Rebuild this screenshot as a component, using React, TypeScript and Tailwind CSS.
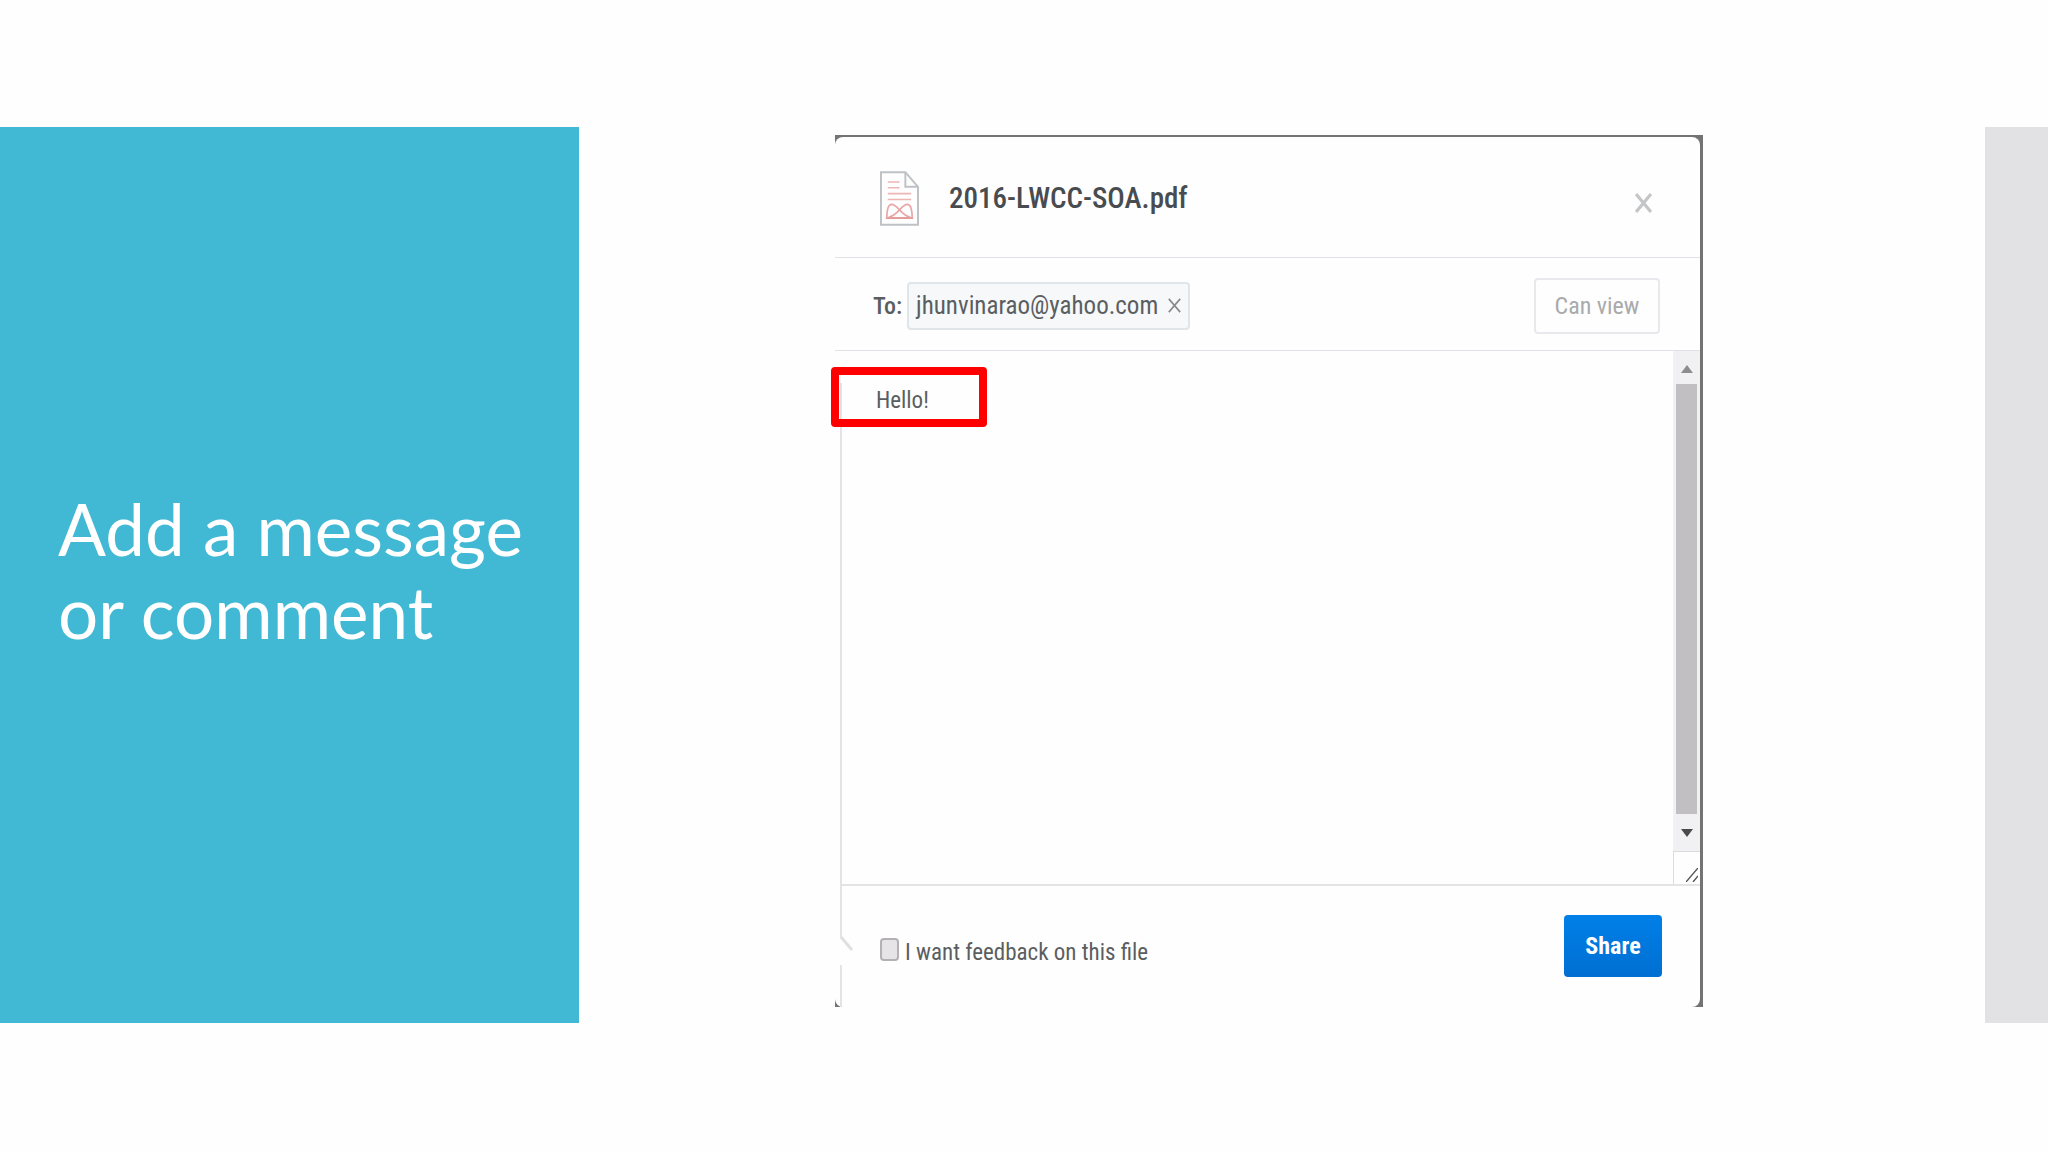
import { useState } from "react";

const FileIcon = () => (
  <svg viewBox="0 0 40 56" className="h-[55px] w-[39px] shrink-0" fill="none">
    <path d="M1 1H26L39 16V55H1Z" stroke="#bfc2c5" strokeWidth="2" />
    <path d="M26 1V16H39" stroke="#bfc2c5" strokeWidth="2" />
    <path d="M8 11H20M8 17H20M8 23H32M8 29H32" stroke="#eeb5b5" strokeWidth="1.6" />
    <path d="M6 48H34" stroke="#e79c9c" strokeWidth="2" />
    <path
      d="M7 48C7 38 9 34 12 34C18 34 22 46 31 47M33 48C33 38 31 34 28 34C22 34 18 46 9 47"
      stroke="#e9a5a5"
      strokeWidth="1.6"
    />
  </svg>
);

const Cross = ({ className }: { className: string }) => (
  <svg viewBox="0 0 16 18" className={className} stroke="currentColor" preserveAspectRatio="none">
    <path d="M1 1L15 17M15 1L1 17" />
  </svg>
);

const ScrollBar = () => (
  <div className="flex w-[27px] shrink-0 flex-col">
    <div className="flex grow flex-col bg-[#f1f0f2]">
      <div className="flex h-[33px] items-center justify-center pt-[2px]">
        <svg viewBox="0 0 12 8" className="h-2 w-3" fill="#8d8d8f">
          <path d="M6 0L12 8H0Z" />
        </svg>
      </div>
      <div className="mx-[3px] grow bg-[#c1bfc1]" />
      <div className="flex h-[37px] items-center justify-center">
        <svg viewBox="0 0 12 8" className="h-2 w-3" fill="#4b494c">
          <path d="M0 0H12L6 8Z" />
        </svg>
      </div>
    </div>
    <div className="flex h-[33px] items-end justify-end border-t border-l border-[#dcdadd] p-[2px]">
      <svg viewBox="0 0 12 14" className="h-[14px] w-3" stroke="#555" strokeWidth="1.4">
        <path d="M0 14L12 0M7 14L12 8" />
      </svg>
    </div>
  </div>
);

const ShareDialog = () => {
  const [message, setMessage] = useState("Hello!");
  const [feedback, setFeedback] = useState(false);

  return (
    <section className="flex grow flex-col bg-[#737373] pt-[2px] pr-[3px] font-['Roboto_Condensed',Roboto,sans-serif] text-[24px] text-[#5b5e61]">
      <div className="relative flex grow flex-col rounded-lg bg-[#fefefe]">
        <header className="flex h-[121px] items-center justify-between border-b border-[#dfe2e6] pt-[3px] pr-12 pl-[45px]">
          <div className="flex items-center gap-[30px]">
            <FileIcon />
            <h2 className="text-[29px] font-medium text-[#484c50]">2016-LWCC-SOA.pdf</h2>
          </div>
          <button type="button" aria-label="Close" className="pt-2 text-[#c4c5c7]">
            <Cross className="h-5 w-[17px] stroke-[3]" />
          </button>
        </header>

        <div className="flex h-[93px] items-center justify-between border-b border-[#dfe2e6] pt-[3px] pr-10 pl-[38px]">
          <div className="flex items-center gap-[5px]">
            <span className="font-medium">To:</span>
            <span className="flex h-12 items-center gap-[10px] rounded border-2 border-[#e0e5e9] bg-[#f6f8fa] px-[7px] text-[25px]">
              jhunvinarao@yahoo.com
              <button type="button" aria-label="Remove" className="text-[#85898c]">
                <Cross className="h-[15px] w-[13px] stroke-[2]" />
              </button>
            </span>
          </div>
          <button
            type="button"
            className="h-14 w-[126px] rounded border-2 border-[#e8e9ed] text-[#a9aaac]"
          >
            Can view
          </button>
        </div>

        <div className="flex grow">
          <textarea
            aria-label="Message"
            value={message}
            onChange={(e) => setMessage(e.target.value)}
            className="mt-8 ml-[5px] grow resize-none overflow-hidden border-l-2 border-[#e4e3e5] pl-[34px] text-[23px] leading-9 outline-none"
          />
          <ScrollBar />
        </div>

        <footer className="ml-[5px] flex h-[123px] items-center justify-between border-t-2 border-l-2 border-[#e4e3e5] pr-[38px] pb-[2px] pl-[38px]">
          <label className="flex items-center gap-[6px] pt-4 text-[23px]">
            <input
              type="checkbox"
              checked={feedback}
              onChange={(e) => setFeedback(e.target.checked)}
              className="mb-2 h-[23px] w-[19px] appearance-none rounded border-2 border-[#b3b1b4] bg-[#e6e4e7] checked:bg-[#0070d6]"
            />
            I want feedback on this file
          </label>
          <button
            type="button"
            className="h-[62px] w-[98px] rounded bg-linear-to-b from-[#0080e8] to-[#006fd2] font-bold text-white"
          >
            Share
          </button>
        </footer>

        {/* pointer notch of the popup */}
        <svg viewBox="0 0 14 30" className="absolute bottom-[42px] left-1 h-[30px] w-[14px]">
          <path d="M0 2L14 15V30H0Z" fill="#fefefe" />
          <path d="M2 2L13 15" stroke="#e0e0e1" strokeWidth="3" />
        </svg>
      </div>
    </section>
  );
};

export default function App() {
  return (
    <div className="grid min-h-screen grid-cols-[579fr_1406fr_63fr] bg-[#fefefe] pt-[127px] pb-[129px]">
      <div className="flex items-center bg-[#41b9d5] pr-8 pb-[10px] pl-[58px]">
        <h1 className="font-[Lato,sans-serif] text-[71px] leading-[83px] text-white">
          Add a message
          <br />
          or comment
        </h1>
      </div>
      <main className="relative flex pt-2 pr-[282px] pb-4 pl-64">
        <ShareDialog />
        <div className="pointer-events-none absolute top-60 left-[252px] h-[60px] w-[156px] rounded border-8 border-[#fe0000]" />
      </main>
      <div className="bg-[#e2e1e3]" />
    </div>
  );
}
